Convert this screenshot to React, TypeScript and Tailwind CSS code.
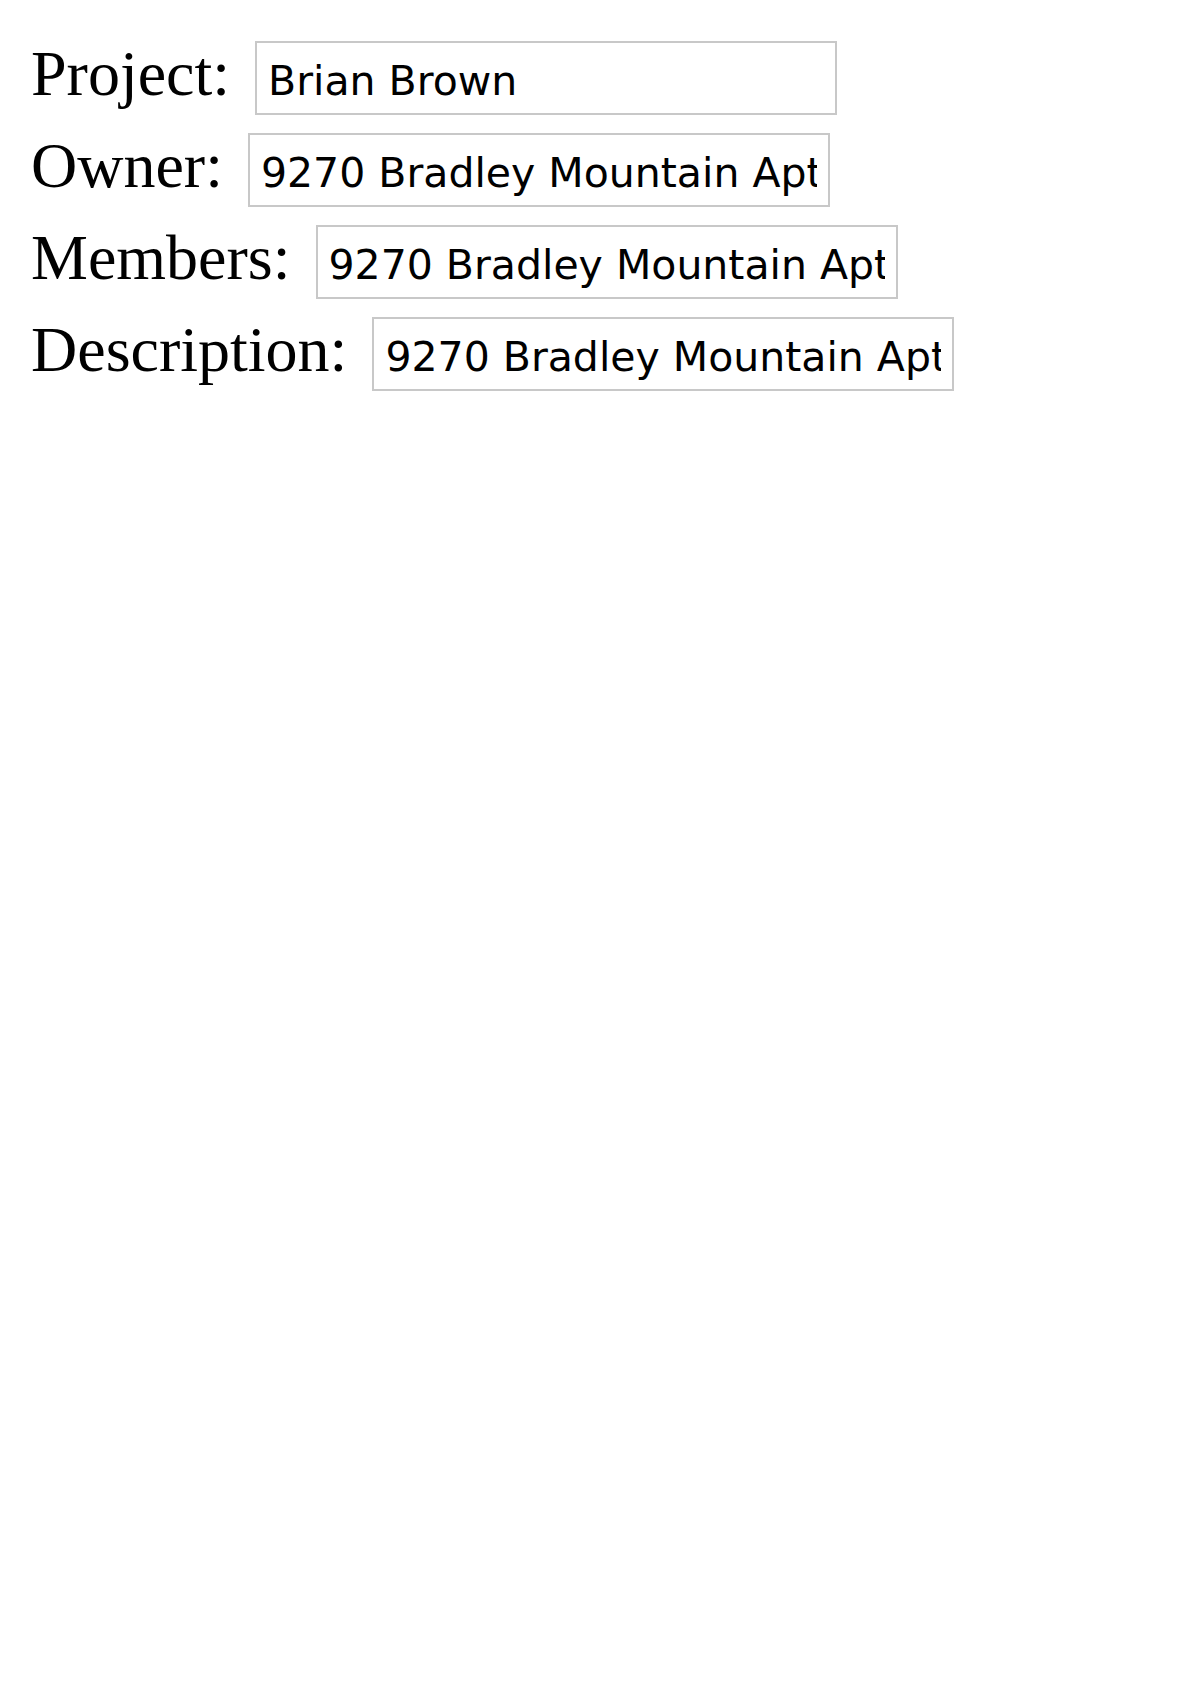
const fields = [
  { label: 'Project:', value: 'Brian Brown' },
  { label: 'Owner:', value: '9270 Bradley Mountain Apt. 528' },
  { label: 'Members:', value: '9270 Bradley Mountain Apt. 528' },
  { label: 'Description:', value: '9270 Bradley Mountain Apt. 528' },
]

export default function App() {
  return (
    <div className="min-h-screen bg-white pl-[31px] pt-[41px]">
      <div className="flex flex-col gap-[18px]">
        {fields.map((f) => (
          <div key={f.label} className="flex items-baseline">
            <label className="font-['Liberation_Serif',serif] text-[64px] leading-[50px] text-black">
              {f.label}
            </label>
            <input
              type="text"
              readOnly
              defaultValue={f.value}
              className="ml-[25px] h-[74px] w-[582px] border-2 border-[#c8c8c8] bg-white px-[11px] pt-[6px] font-['DejaVu_Sans',sans-serif] text-[41px] text-black outline-none"
            />
          </div>
        ))}
      </div>
    </div>
  )
}
